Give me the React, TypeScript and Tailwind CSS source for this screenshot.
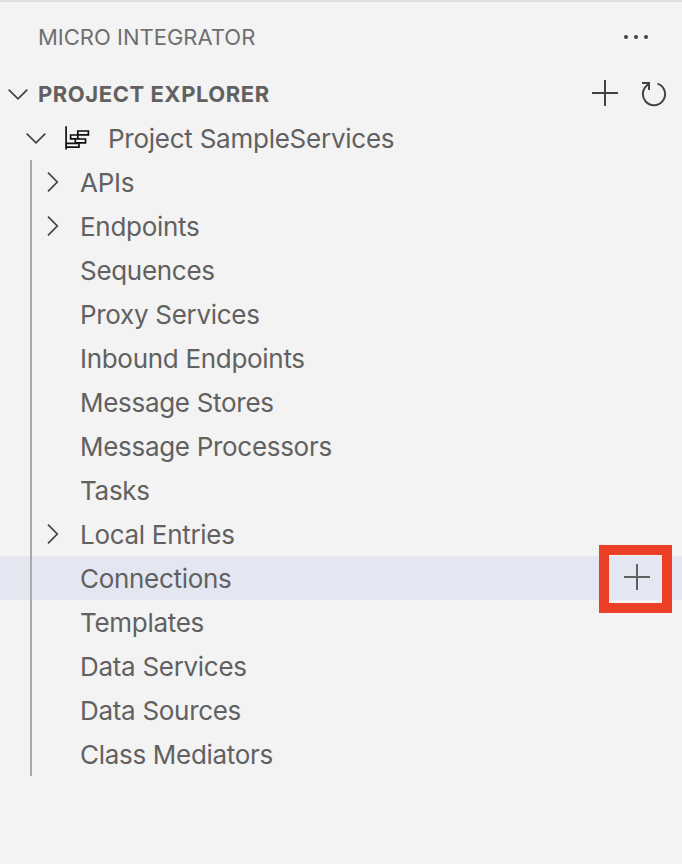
const items = ['APIs', 'Endpoints', 'Sequences', 'Proxy Services', 'Inbound Endpoints', 'Message Stores', 'Message Processors', 'Tasks', 'Local Entries', 'Connections', 'Templates', 'Data Services', 'Data Sources', 'Class Mediators'];
const expandable = ['APIs', 'Endpoints', 'Local Entries'];

function Plus({ color = '#424242' }: { color?: string }) {
  return (
    <svg className="shrink-0" width="26" height="26" viewBox="0 0 26 26" fill="none" stroke={color} strokeWidth="2">
      <path d="M13 0v26M0 13h26" />
    </svg>
  );
}

function Chevron({ down = false }: { down?: boolean }) {
  return (
    <svg className="shrink-0" width="20" height="20" viewBox="0 0 20 20" fill="none" stroke="#424242" strokeWidth="1.7">
      <path d={down ? 'M.7 5.7 10 14.9 19.3 5.7' : 'M5 .7 14.3 10 5 19.3'} />
    </svg>
  );
}

export default function App() {
  return (
    <div className="h-[864px] w-[682px] overflow-hidden border-t-2 border-[#dedede] bg-[#f3f3f3] font-['Inter',sans-serif] text-[#616161]">
      <header className="flex h-[70px] items-center justify-between pr-8 pl-[38px] text-[22px] text-[#6f6f6f]">
        <span>MICRO INTEGRATOR</span>
        <svg width="26" height="4" viewBox="0 0 26 4" fill="#424242">
          <circle cx="2" cy="2" r="2" /><circle cx="12" cy="2" r="2" /><circle cx="22" cy="2" r="2" />
        </svg>
      </header>
      <div className="flex h-[44px] items-center pr-[15px] pl-2 text-[22px] font-bold">
        <Chevron down />
        <span className="ml-[10px] grow tracking-[0.55px]">PROJECT EXPLORER</span>
        <span className="-mt-[2px]"><Plus /></span>
        <svg className="ml-[22px]" width="27" height="28" viewBox="0 0 27 28" fill="none" stroke="#424242" strokeWidth="2">
          <path d="M2 3h7v7M17.5 3.6A11.1 11.1 0 1 1 9 4.2" />
        </svg>
      </div>
      <div className="flex h-[44px] items-center pl-[26px] text-[26px] tracking-[-0.25px]">
        <Chevron down />
        <svg className="ml-[18px]" width="26" height="26" viewBox="64 125 26 26" fill="none" stroke="#111" strokeWidth="1.7">
          <path d="M66.1 126.3v23.2M77.8 131h10.6v3.8H77.8zM77.8 135h-7.2v3.9h9.6M77.8 135v4M75.3 139h10.2v3.8H75.3zM66 143.4h13v3.7H66z" />
        </svg>
        <span className="ml-[18px]">Project SampleServices</span>
      </div>
      <ul className="relative">
        {items.map((item) => (
          <li key={item} className={`flex h-[44px] items-center pl-[43px] text-[26px] tracking-[-0.3px] ${item === 'Connections' ? 'bg-[#e4e6f1]' : ''}`}>
            <span className="flex w-[37px] shrink-0">{expandable.includes(item) && <Chevron />}</span>
            <span className="grow">{item}</span>
            {item === 'Connections' && (
              <span className="mt-[2px] mr-[10px] flex h-[68px] w-[73px] shrink-0 items-center justify-center border-[10px] border-[#eb4026] pb-1 pl-[3px]"><Plus color="#616161" /></span>
            )}
          </li>
        ))}
        <span className="absolute top-0 left-[30px] h-full w-[2px] bg-[#a9a9a9]" />
      </ul>
    </div>
  );
}
